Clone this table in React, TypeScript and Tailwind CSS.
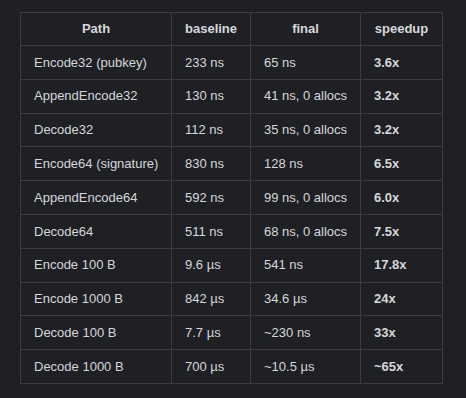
const rows: [string, string, string, string][] = [
  ["Encode32 (pubkey)", "233 ns", "65 ns", "3.6x"],
  ["AppendEncode32", "130 ns", "41 ns, 0 allocs", "3.2x"],
  ["Decode32", "112 ns", "35 ns, 0 allocs", "3.2x"],
  ["Encode64 (signature)", "830 ns", "128 ns", "6.5x"],
  ["AppendEncode64", "592 ns", "99 ns, 0 allocs", "6.0x"],
  ["Decode64", "511 ns", "68 ns, 0 allocs", "7.5x"],
  ["Encode 100 B", "9.6 µs", "541 ns", "17.8x"],
  ["Encode 1000 B", "842 µs", "34.6 µs", "24x"],
  ["Decode 100 B", "7.7 µs", "~230 ns", "33x"],
  ["Decode 1000 B", "700 µs", "~10.5 µs", "~65x"],
];

export default function App() {
  return (
    <div className="w-[466px] h-[398px] bg-[#1f2023] pt-[12px] pl-[20px] font-['Liberation_Sans'] text-[13px] text-[#d5d7db]">
      <table className="border-collapse table-fixed w-[422px] whitespace-nowrap">
        <colgroup>
          <col className="w-[151px]" />
          <col className="w-[79px]" />
          <col className="w-[110px]" />
          <col className="w-[82px]" />
        </colgroup>
        <thead>
          <tr className="h-[33px]">
            {["Path", "baseline", "final", "speedup"].map((h) => (
              <th
                key={h}
                className="border border-[#3b3d42] px-[13px] py-0 text-center font-bold text-[#d5d7db]"
              >
                {h}
              </th>
            ))}
          </tr>
        </thead>
        <tbody>
          {rows.map((r) => (
            <tr key={r[0]} className="h-[33.8px]">
              <td className="border border-[#3b3d42] px-[13px] py-0">{r[0]}</td>
              <td className="border border-[#3b3d42] px-[13px] py-0">{r[1]}</td>
              <td className="border border-[#3b3d42] px-[13px] py-0">{r[2]}</td>
              <td className="border border-[#3b3d42] px-[13px] py-0 font-bold">{r[3]}</td>
            </tr>
          ))}
        </tbody>
      </table>
    </div>
  );
}
